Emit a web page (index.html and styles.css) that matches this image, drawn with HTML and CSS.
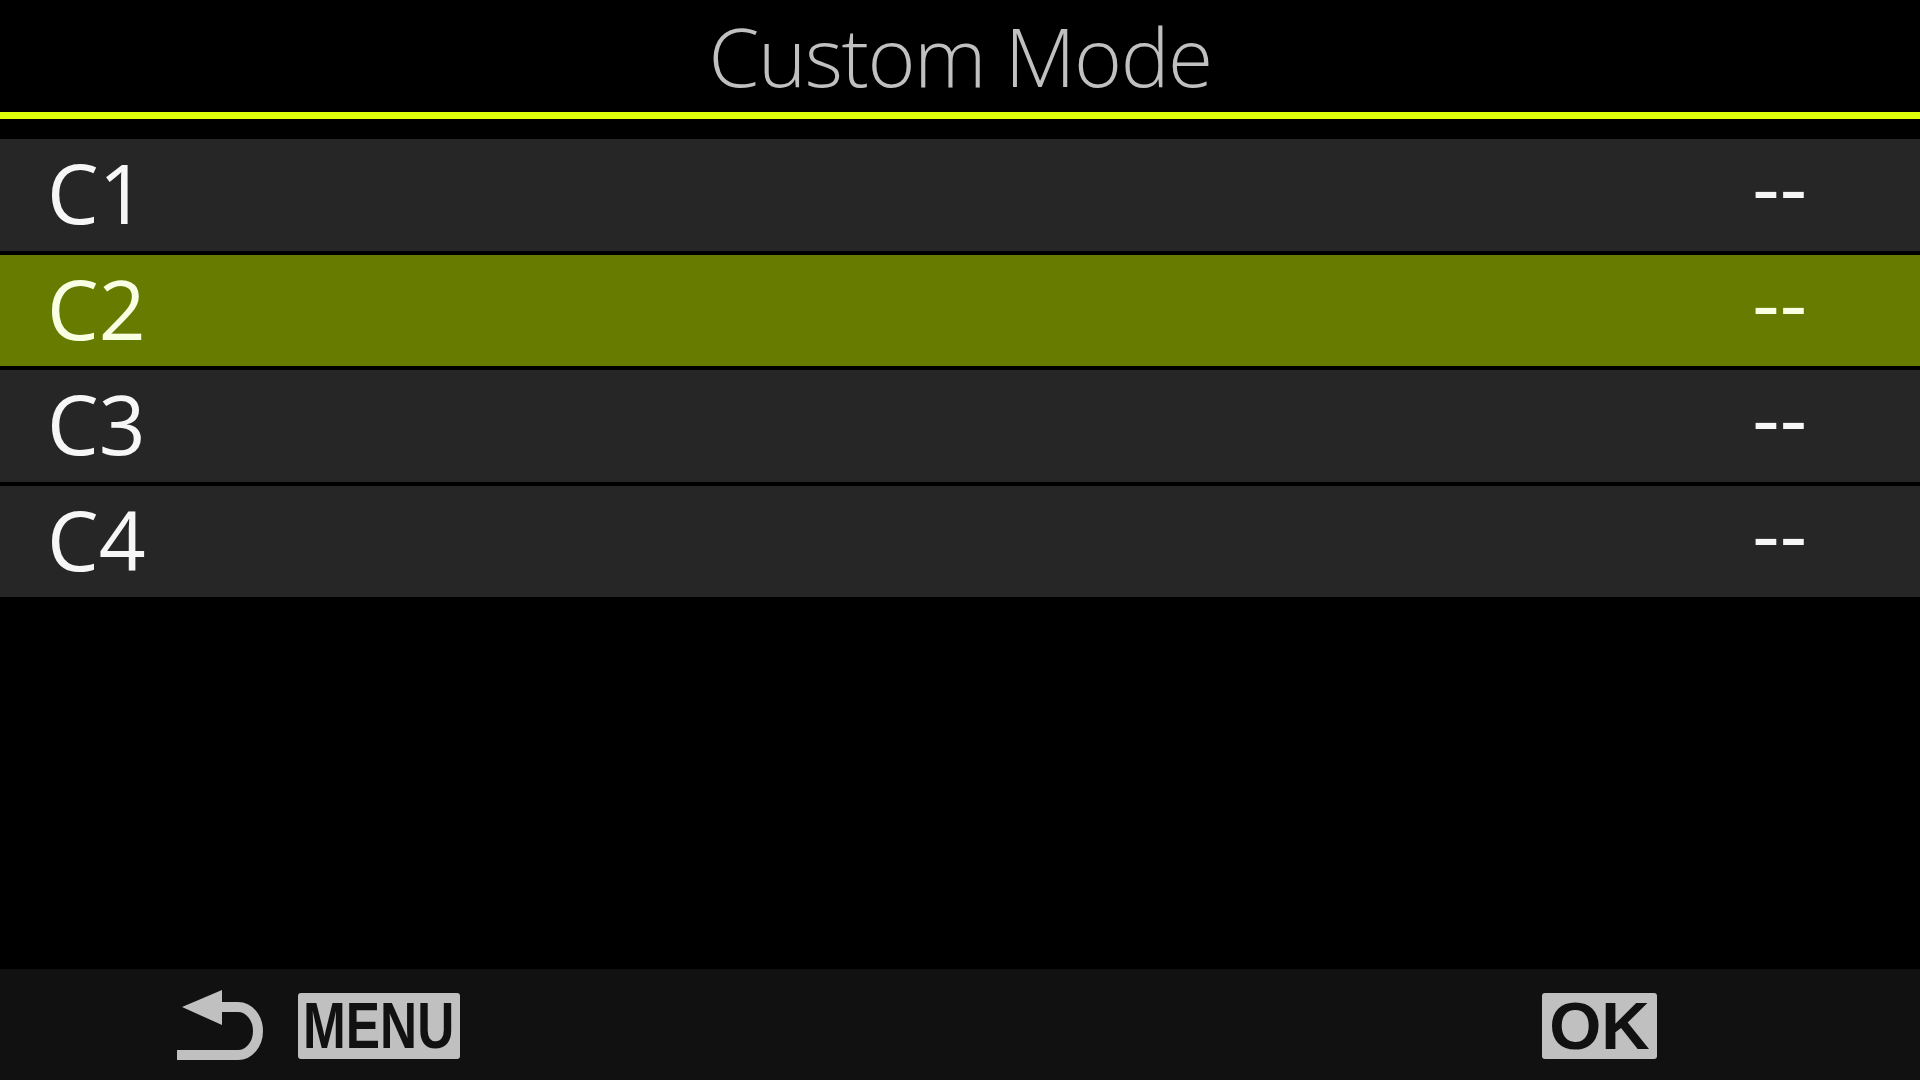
FILE: index.html
```html
<!DOCTYPE html>
<html lang="en">
<head>
    <meta charset="UTF-8">
    <meta name="viewport" content="width=device-width, initial-scale=1.0">
    <title>Custom Mode</title>
    <link rel="stylesheet" href="styles.css">
</head>
<body>
    <div class="screen">
        <h1 class="title">Custom Mode</h1>

        <div class="list">
            <div class="row">
                <span class="name">C1</span>
                <span class="value">--</span>
            </div>
            <div class="row selected">
                <span class="name">C2</span>
                <span class="value">--</span>
            </div>
            <div class="row">
                <span class="name">C3</span>
                <span class="value">--</span>
            </div>
            <div class="row">
                <span class="name">C4</span>
                <span class="value">--</span>
            </div>
        </div>

        <div class="guide">
            <svg class="back" width="95" height="78" viewBox="0 0 95 78">
                <polygon points="10,20 50,3 50,38" fill="#c0c0c0"/>
                <path d="M46 20 H66 A20 24 0 0 1 66 68 H5" fill="none" stroke="#c0c0c0" stroke-width="10"/>
            </svg>
            <div class="key key-menu"><span>MENU</span></div>
            <div class="key key-ok"><span>OK</span></div>
        </div>
    </div>
</body>
</html>
```

FILE: styles.css
```css
body {
    margin: 0;
    background: #000;
    font-family: "Open Sans", "Noto Sans", sans-serif;
}

.screen {
    width: 1920px;
    height: 1080px;
    display: flex;
    flex-direction: column;
    overflow: hidden;
}

.title {
    margin: 0;
    height: 112px;
    line-height: 110px;
    font-size: 82px;
    font-weight: 300;
    letter-spacing: -1.5px;
    color: #c0c0c0;
    text-align: center;
    border-bottom: 7px solid #dcff0a;
}

.list {
    margin-top: 20px;
    display: flex;
    flex-direction: column;
    gap: 4px;
}

.row {
    height: 111.5px;
    box-sizing: border-box;
    padding: 0 113px 5px 47px;
    display: flex;
    align-items: center;
    justify-content: space-between;
    background: #262626;
    color: #f6f6f6;
    font-size: 82px;
    font-weight: 400;
}

.row.selected {
    background: #667b00;
    color: #f9ffe2;
}

.value {
    font-size: 85px;
    position: relative;
    top: -7px;
}

.guide {
    margin-top: auto;
    height: 111px;
    background: #111;
    display: flex;
    align-items: center;
    padding: 2px 263px 0 172px;
    box-sizing: border-box;
}

.back {
    display: block;
}

.key {
    height: 66px;
    background: #c0c0c0;
    border-radius: 3px;
    display: flex;
    align-items: center;
    justify-content: center;
    font-family: "Liberation Sans", Arial, sans-serif;
    font-weight: bold;
    color: #111;
}

.key-menu {
    width: 162px;
    margin-left: 31px;
    font-size: 65px;
}

.key-menu span {
    display: inline-block;
    transform: scaleX(0.79);
}

.key-ok {
    width: 115px;
    margin-left: auto;
    font-size: 67px;
}
```
